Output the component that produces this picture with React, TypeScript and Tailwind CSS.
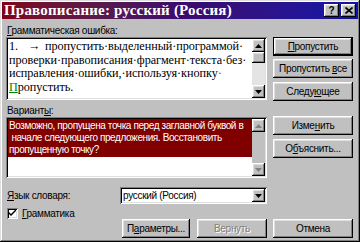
import React from 'react';

const raised =
  'shadow-[inset_-1px_-1px_#000,inset_1px_1px_#fff,inset_-2px_-2px_#808080,inset_2px_2px_#dfdfdf]';
const sunken =
  'shadow-[inset_1px_1px_#808080,inset_-1px_-1px_#fff,inset_2px_2px_#000,inset_-2px_-2px_#dfdfdf]';

function Arrow({ dir, disabled }: { dir: 'up' | 'down'; disabled?: boolean }) {
  const fill = disabled ? '#808080' : '#000';
  return (
    <svg width="7" height="4" viewBox="0 0 7 4">
      {dir === 'up' ? <path d="M3.5 0 L7 4 L0 4 Z" fill={fill} /> : <path d="M0 0 L7 0 L3.5 4 Z" fill={fill} />}
    </svg>
  );
}

function ScrollBtn({ dir, disabled }: { dir: 'up' | 'down'; disabled?: boolean }) {
  return (
    <div className={`w-[13px] h-[13px] shrink-0 bg-[#c0c0c0] flex items-center justify-center ${raised}`}>
      <Arrow dir={dir} disabled={disabled} />
    </div>
  );
}

function Btn({ children, def, disabled, className = '' }: { children: React.ReactNode; def?: boolean; disabled?: boolean; className?: string }) {
  return (
    <div className={`h-[19px] ${def ? 'border border-black' : ''} ${className}`}>
      <div
        className={`h-full bg-[#c0c0c0] flex items-center justify-center whitespace-nowrap ${raised} ${
          disabled ? 'text-[#808080] [text-shadow:1px_1px_0_#fff]' : 'text-black'
        }`}
      >
        {children}
      </div>
    </div>
  );
}

const Dot = ({ green }: { green?: boolean }) => <span className={green ? 'text-[#008000]' : ''}>·</span>;

export default function App() {
  return (
    <div className="w-[360px] h-[242px] bg-[#c0c0c0] p-[2px] shadow-[inset_-1px_-1px_#000,inset_1px_1px_#dfdfdf,inset_-2px_-2px_#808080,inset_2px_2px_#fff] font-['Liberation_Sans',Arial,sans-serif] text-[10px] tracking-[-0.3px] text-black flex flex-col overflow-hidden">
      {/* title bar */}
      <div className="h-[17px] shrink-0 bg-gradient-to-r from-[#800018] via-[#3c0a6c] to-[#0c14aa] flex items-center pl-[2px] pr-[2px]">
        <span className="font-['Liberation_Serif',serif] font-bold text-[15px] text-white leading-none tracking-[0.2px]">
          Правописание: русский (Россия)
        </span>
        <div className="ml-auto flex items-center tracking-normal">
          <div className={`w-[15px] h-[13px] bg-[#c0c0c0] flex items-center justify-center ${raised}`}>
            <span className="font-bold text-[10px] leading-none">?</span>
          </div>
          <div className={`ml-[2px] w-[15px] h-[13px] bg-[#c0c0c0] flex items-center justify-center ${raised}`}>
            <svg width="8" height="7" viewBox="0 0 8 7">
              <path d="M0.5 0.5 L7.5 6.5 M7.5 0.5 L0.5 6.5" stroke="#000" strokeWidth="1.6" />
            </svg>
          </div>
        </div>
      </div>

      <div className="flex pl-[4px]">
        {/* left column */}
        <div className="w-[261px] flex flex-col">
          <div className="mt-[5px] h-[13px] leading-[13px] pl-[1px]">
            <span className="underline">Г</span>рамматическая ошибка:
          </div>
          <div className={`h-[63px] bg-white flex p-[2px] ${sunken}`}>
            <div className="flex-1 min-w-0 overflow-hidden font-['Liberation_Serif',serif] text-[12.2px] tracking-[-0.05px] leading-[13.5px] pl-[1px] pt-[1px] whitespace-nowrap">
              <div className="flex">
                <span className="w-[19px]">1.</span>
                <span className="w-[17px]">→</span>
                <span>
                  пропустить<Dot />выделенный<Dot />программой<Dot />
                </span>
              </div>
              <div>
                проверки<Dot />правописания<Dot />фрагмент<Dot />текста<Dot />без<Dot />
              </div>
              <div>
                исправления<Dot />ошибки,<Dot />используя<Dot />кнопку<Dot green />
              </div>
              <div>
                <span className="text-[#008000] underline">П</span>ропустить.
              </div>
            </div>
            <div className="w-[13px] flex flex-col bg-[#e4e4e4]">
              <ScrollBtn dir="up" />
              <div className={`h-[11px] bg-[#c0c0c0] ${raised}`} />
              <div className="flex-1" />
              <ScrollBtn dir="down" />
            </div>
          </div>

          <div className="mt-[4px] h-[13px] leading-[13px] pl-[1px]">
            Вариант<span className="underline">ы</span>:
          </div>
          <div className={`h-[61px] bg-white flex p-[2px] ${sunken}`}>
            <div className="flex-1 min-w-0 overflow-hidden">
              <div className="bg-[#800000] text-white tracking-[-0.4px] leading-[12px] pl-[1px] pt-[1px] pb-[1px] whitespace-pre">
                <div>Возможно, пропущена точка перед заглавной буквой в</div>
                <div> начале следующего предложения. Восстановить</div>
                <div>пропущенную точку?</div>
              </div>
            </div>
            <div className="w-[13px] flex flex-col bg-[#c0c0c0]">
              <ScrollBtn dir="up" disabled />
              <div className="flex-1" />
              <ScrollBtn dir="down" disabled />
            </div>
          </div>

          <div className="mt-[9px] h-[17px] flex items-center">
            <div className="w-[114px] pl-[1px]">
              <span className="underline">Я</span>зык словаря:
            </div>
            <div className={`flex-1 h-full bg-white flex items-center p-[2px] ${sunken}`}>
              <span className="flex-1 pl-[1px]">русский (Россия)</span>
              <ScrollBtn dir="down" />
            </div>
          </div>

          <div className="mt-[4px] h-[11px] flex items-center pl-[1px]">
            <div className={`w-[11px] h-[11px] bg-white flex items-center justify-center ${sunken}`}>
              <svg width="7" height="7" viewBox="0 0 7 7">
                <path d="M0 2 L0 4 L2 6 L7 1 L7 -1 L2 4 Z" fill="#000" />
              </svg>
            </div>
            <span className="ml-[4px]">
              <span className="underline">Г</span>рамматика
            </span>
          </div>

          <div className="flex pl-[116px] gap-[7px]">
            <Btn className="w-[68px]">
              <span>
                П<span className="underline">а</span>раметры...
              </span>
            </Btn>
            <Btn className="w-[70px]" disabled>
              Вернуть
            </Btn>
          </div>
        </div>

        {/* right column */}
        <div className="ml-[6px] w-[80px] flex flex-col pt-[18px]">
          <Btn def>
            <span>
              <span className="underline">П</span>ропустить
            </span>
          </Btn>
          <Btn className="mt-[3px]">
            <span>
              Пропустить <span className="underline">в</span>се
            </span>
          </Btn>
          <Btn className="mt-[4px]">
            <span>
              Следу<span className="underline">ю</span>щее
            </span>
          </Btn>
          <Btn className="mt-[15px]">
            <span>
              Изме<span className="underline">н</span>ить
            </span>
          </Btn>
          <Btn className="mt-[4px]">
            <span>
              О<span className="underline">б</span>ъяснить...
            </span>
          </Btn>
          <Btn className="mt-auto">Отмена</Btn>
        </div>
      </div>
    </div>
  );
}
